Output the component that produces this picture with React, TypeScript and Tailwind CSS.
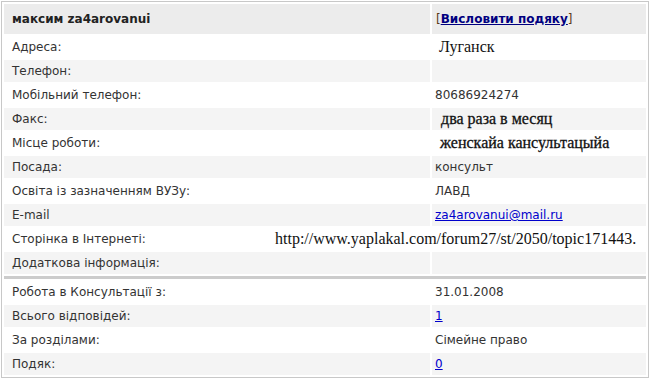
import React from "react";

const sans = { fontFamily: '"DejaVu Sans", Verdana, sans-serif' };
const serif = { fontFamily: '"Liberation Serif", "Times New Roman", serif' };

type Row = { label: string; value?: React.ReactNode; gray: boolean };

const Link = ({ children }: { children: React.ReactNode }) => (
  <a href="#" className="text-[#0000cc] underline">
    {children}
  </a>
);

const top: Row[] = [
  { label: "Адреса:", value: <span style={serif} className="pl-[4px] text-[16px] text-[#111]">Луганск</span>, gray: false },
  { label: "Телефон:", value: null, gray: true },
  { label: "Мобільний телефон:", value: "80686924274", gray: false },
  { label: "Факс:", value: <span style={serif} className="pl-[6px] text-[16px] text-[#111] [-webkit-text-stroke:0.3px_#111]">два раза в месяц</span>, gray: true },
  { label: "Місце роботи:", value: <span style={serif} className="pl-[5px] text-[16px] text-[#111] [-webkit-text-stroke:0.3px_#111]">женскайа кансультацыйа</span>, gray: false },
  { label: "Посада:", value: "консульт", gray: true },
  { label: "Освіта із зазначенням ВУЗу:", value: "ЛАВД", gray: false },
  { label: "E-mail", value: <Link>za4arovanui@mail.ru</Link>, gray: true },
  {
    label: "Сторінка в Інтернеті:",
    value: (
      <span style={serif} className="ml-[-160px] whitespace-nowrap text-[16px] text-[#111]">
        http://www.yaplakal.com/forum27/st/2050/topic171443.
      </span>
    ),
    gray: false,
  },
  { label: "Додаткова інформація:", value: null, gray: true },
];

const bottom: Row[] = [
  { label: "Робота в Консультації з:", value: "31.01.2008", gray: false },
  { label: "Всього відповідей:", value: <Link>1</Link>, gray: true },
  { label: "За розділами:", value: "Сімейне право", gray: false },
  { label: "Подяк:", value: <Link>0</Link>, gray: true },
];

function DataRow({ r }: { r: Row }) {
  const bg = r.gray ? "bg-[#f4f4f4]" : "bg-white";
  return (
    <div className="flex h-[22px] gap-[2px]">
      <div className={`flex w-[426px] items-center pl-[8px] ${bg}`}>{r.label}</div>
      <div className={`flex flex-1 items-center pl-[3px] ${bg}`}>{r.value}</div>
    </div>
  );
}

export default function App() {
  return (
    <div className="bg-white pl-[1px] pt-[1px] text-[12px] text-[#333]" style={sans}>
      <div className="flex w-[648px] flex-col gap-[2px] border border-[#c8c8c8] p-[2px]">
        <div className="flex h-[30px] gap-[2px]">
          <div className="flex w-[426px] items-center bg-[#ececec] pl-[8px] font-bold text-[#222]">
            максим za4arovanui
          </div>
          <div className="flex flex-1 items-center bg-[#ececec] pl-[4px] text-[#5a3b1a]">
            [
            <a href="#" className="font-bold text-[#000080] underline">
              Висловити подяку
            </a>
            ]
          </div>
        </div>
        {top.map((r) => (
          <DataRow key={r.label} r={r} />
        ))}
        <div className="h-[3px] bg-[#cccccc]" />
        {bottom.map((r) => (
          <DataRow key={r.label} r={r} />
        ))}
      </div>
    </div>
  );
}
